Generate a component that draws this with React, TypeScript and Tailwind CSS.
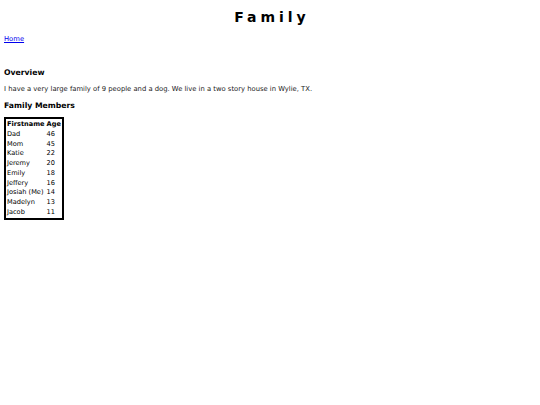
export default function App() {
  const members = [
    { name: "Dad", age: 46 },
    { name: "Mom", age: 45 },
    { name: "Katie", age: 22 },
    { name: "Jeremy", age: 20 },
    { name: "Emily", age: 18 },
    { name: "Jeffery", age: 16 },
    { name: "Josiah (Me)", age: 14 },
    { name: "Madelyn", age: 13 },
    { name: "Jacob", age: 11 },
  ];

  return (
    <div className="min-h-[405px] bg-white px-[4px] text-black font-['DejaVu_Sans',Verdana,sans-serif]">
      <h1 className="pt-[9px] pl-[4px] text-center text-[14px] leading-[17px] font-bold tracking-[4px]">Family</h1>
      <a href="#" className="mt-[8px] block w-fit text-[6.8px] leading-[10px] text-[#0000ee] underline">
        Home
      </a>
      <h3 className="mt-[23px] text-[7.7px] leading-[11px] font-bold">Overview</h3>
      <p className="mt-[7px] text-[6.8px] leading-[9px] text-[#222]">
        I have a very large family of 9 people and a dog. We live in a two story house in Wylie, TX.
      </p>
      <h3 className="mt-[6px] text-[7.7px] leading-[11px] font-bold">Family Members</h3>
      <table className="mt-[6px] border-2 border-black border-separate border-spacing-0 text-[6.6px] leading-[9.75px]">
        <thead>
          <tr>
            <th className="pl-[1px] pr-[2px] pt-[1px] text-left font-bold">Firstname</th>
            <th className="pr-[1px] pt-[1px] text-left font-bold">Age</th>
          </tr>
        </thead>
        <tbody>
          {members.map((m) => (
            <tr key={m.name}>
              <td className="pl-[1px] pr-[2px]">{m.name}</td>
              <td className="pr-[1px]">{m.age}</td>
            </tr>
          ))}
        </tbody>
      </table>
    </div>
  );
}
